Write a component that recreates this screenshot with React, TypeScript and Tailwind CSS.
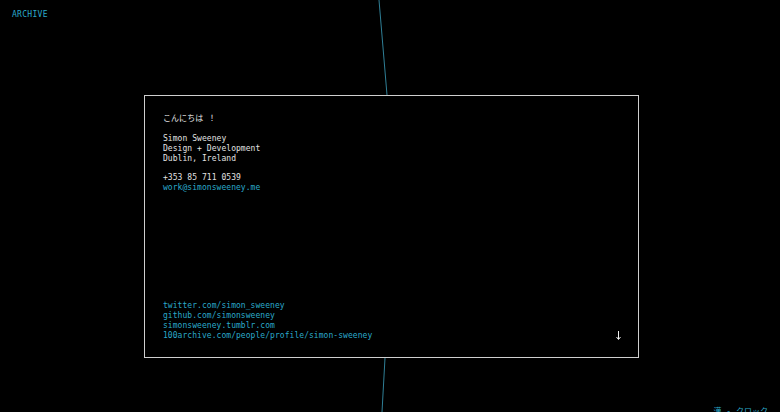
export default function App() {
    const mono = { fontFamily: '"DejaVu Sans Mono", "Noto Sans CJK JP", monospace' };
    return (
        <div className="relative w-[780px] h-[412px] bg-black overflow-hidden" style={mono}>
            {/* string line behind the card */}
            <svg className="absolute inset-0" width="780" height="412">
                <path d="M379 0 L387 95 Q391 226 385 358 L382 412" stroke="#2f7f96" strokeWidth="1" fill="none" />
            </svg>

            <a className="absolute left-[12px] top-[10px] text-[8px] leading-[10px] text-[#2aa9ca] tracking-[0.3px]">ARCHIVE</a>

            <div className="relative pt-[95px] pl-[144px]">
                <div className="w-[495px] h-[263px] bg-black border border-[#cfcfcf] px-[18px] pt-[18px] pb-[16px] flex flex-col text-[8px] leading-[10px] tracking-[0.05px] text-[#e2e2e2]">
                    <p>こんにちは ！</p>
                    <p className="mt-[10px]">Simon Sweeney</p>
                    <p>Design + Development</p>
                    <p>Dublin, Ireland</p>
                    <p className="mt-[9px]">+353 85 711 0539</p>
                    <p className="text-[#2aa9ca]">work@simonsweeney.me</p>

                    <div className="mt-auto flex items-end justify-between text-[#2aa9ca]">
                        <div className="flex flex-col">
                            <span>twitter.com/simon_sweeney</span>
                            <span>github.com/simonsweeney</span>
                            <span>simonsweeney.tumblr.com</span>
                            <span>100archive.com/people/profile/simon-sweeney</span>
                        </div>
                        {/* down arrow */}
                        <svg width="5" height="9" viewBox="0 0 5 9" className="-mr-[1px] mb-[1px]">
                            <path d="M2.5 0 V8 M0.5 6 L2.5 8.5 L4.5 6" stroke="#f0f0f0" strokeWidth="1" fill="none" />
                        </svg>
                    </div>
                </div>
            </div>

            <span className="absolute right-[12px] bottom-[-5px] text-[8px] leading-[11px] text-[#2aa9ca]">漢 - クロック</span>
        </div>
    );
}
